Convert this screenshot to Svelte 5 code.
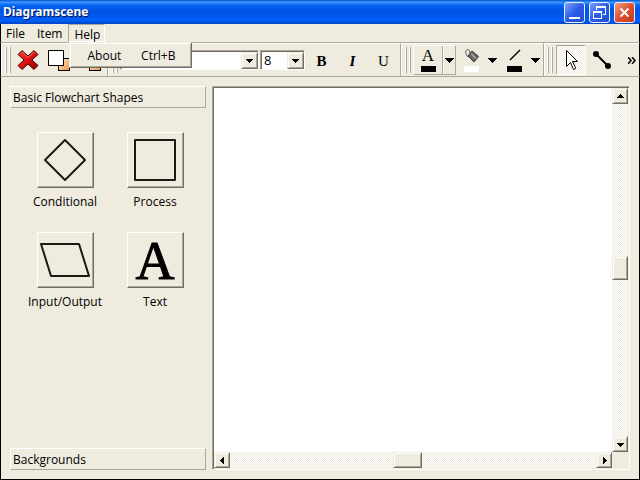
<script>
  const menus = ["File", "Item"];
  const shapes = ["Conditional", "Process", "Input/Output", "Text"];

  let family = $state("");
  let size = $state("8");
  let pointer = $state(true);
  let helpOpen = $state(true);
</script>

{#snippet arrow(dir)}
  <svg class="arrow" width="7" height="7" viewBox="0 0 7 7" shape-rendering="crispEdges">
    {#if dir === "up"}
      <path d="M3 1h1v1h1v1h1v1h1v1H0V4h1V3h1V2h1z" />
    {:else if dir === "down"}
      <path d="M0 2h7v1H6v1H5v1H4v1H3V5H2V4H1V3H0z" />
    {:else if dir === "left"}
      <path d="M5 0v7H4V6H3V5H2V4H1V3h1V2h1V1h1V0z" />
    {:else}
      <path d="M2 0v7h1V6h1V5h1V4h1V3H5V2H4V1H3V0z" />
    {/if}
  </svg>
{/snippet}

{#snippet bigArrow()}
  <svg width="9" height="5" viewBox="0 0 9 5" shape-rendering="crispEdges">
    <path d="M0 0h9v1H8v1H7v1H6v1H5v1H4V4H3V3H2V2H1V1H0z" />
  </svg>
{/snippet}

<div class="window">
  <header class="titlebar">
    <h1>Diagramscene</h1>
    <button class="caption" aria-label="Minimize">
      <svg width="19" height="19" viewBox="0 0 19 19"><path d="M4 14h11v2H4z" fill="#fff" /></svg>
    </button>
    <button class="caption" aria-label="Restore">
      <svg width="19" height="19" viewBox="0 0 19 19" fill="none" stroke="#fff" shape-rendering="crispEdges">
        <path d="M6.5 7V3.5h9v8H13M6 4.5h10M3.5 8.5h8v7h-8zM3 9.5h9" />
      </svg>
    </button>
    <button class="caption close" aria-label="Close">
      <svg width="19" height="19" viewBox="0 0 19 19" stroke="#fff" stroke-width="2">
        <path d="M5.5 5.5l8 8M13.5 5.5l-8 8" />
      </svg>
    </button>
  </header>

  <nav class="menubar">
    {#each menus as menu}
      <button class="menu">{menu}</button>
    {/each}
    <div class="menu-holder">
      <button class="menu" class:open={helpOpen} onclick={() => (helpOpen = !helpOpen)}>Help</button>
      {#if helpOpen}
        <div class="popup">
          <button class="entry"><span>About</span><span>Ctrl+B</span></button>
        </div>
      {/if}
    </div>
  </nav>

  <div class="toolbars">
    <div class="toolbar edit">
      <span class="handle"></span>
      <button class="tool" aria-label="Delete">
        <svg width="22" height="22" viewBox="0 0 22 22">
          <defs>
            <linearGradient id="red" x1="0" y1="0" x2="1" y2="1">
              <stop offset="0" stop-color="#f04038" />
              <stop offset="0.5" stop-color="#e01010" />
              <stop offset="1" stop-color="#900000" />
            </linearGradient>
          </defs>
          <path
            d="M5 1.500l6 5.500 6-5.500 4 4-6 5.500 6 5.500-4 4-6-5.500-6 5.500-4-4 6-5.500-6-5.500z"
            fill="url(#red)"
            stroke="#400808"
            stroke-linejoin="round"
          />
          <path d="M5 3l6 5.500 6-5.500" fill="none" stroke="#f47068" />
        </svg>
      </button>
      <button class="tool" aria-label="Bring to front">
        <svg width="24" height="24" viewBox="0 0 24 24">
          <defs>
            <linearGradient id="peach" x1="0" y1="0" x2="1" y2="1">
              <stop offset="0" stop-color="#fff0e0" />
              <stop offset="1" stop-color="#f09040" />
            </linearGradient>
          </defs>
          <rect x="11.5" y="10.5" width="11" height="12" fill="url(#peach)" stroke="#000" />
          <rect x="1.5" y="2.5" width="15" height="15" fill="#fff" stroke="#000" />
        </svg>
      </button>
      <button class="tool" aria-label="Send to back">
        <svg width="24" height="24" viewBox="0 0 24 24">
          <rect x="1.5" y="2.5" width="11" height="11" fill="#fff" stroke="#000" />
          <rect x="11.5" y="7.500" width="11" height="15" fill="url(#peach)" stroke="#000" />
        </svg>
      </button>
    </div>

    <div class="toolbar text">
      <span class="handle"></span>
      <div class="combo family">
        <select aria-label="Font" bind:value={family}><option value=""></option></select>
        <span class="drop">{@render arrow("down")}</span>
      </div>
      <div class="combo size">
        <select aria-label="Font size" bind:value={size}>
          <option>8</option>
          <option>10</option>
          <option>12</option>
        </select>
        <span class="drop">{@render arrow("down")}</span>
      </div>
      <button class="tool letter bold">B</button>
      <button class="tool letter italic">I</button>
      <button class="tool letter">U</button>
    </div>

    <div class="toolbar color">
      <span class="handle"></span>
      <div class="split raised">
        <button class="main" aria-label="Text color">
          <span class="glyph">A</span>
          <span class="swatch"></span>
        </button>
        <button class="more" aria-label="Choose text color">{@render bigArrow()}</button>
      </div>
      <div class="split">
        <button class="main" aria-label="Fill color">
          <svg width="16" height="16" viewBox="0 0 16 16">
            <path d="M8 3l6.500 5.500-4.500 5.500-6-6z" fill="#666" stroke="#333" />
            <path d="M7 5.500l5 5" stroke="#aaa" stroke-width="1.500" />
            <path d="M4 9C1 6 1 2 3.500 1.500 5 1 6 4 6 7" fill="none" stroke="#555" />
          </svg>
          <span class="swatch white"></span>
        </button>
        <button class="more" aria-label="Choose fill color">{@render bigArrow()}</button>
      </div>
      <div class="split">
        <button class="main" aria-label="Line color">
          <svg width="16" height="16" viewBox="0 0 16 16">
            <path d="M3 12L13 2" stroke="#000" stroke-width="1.5" />
          </svg>
          <span class="swatch"></span>
        </button>
        <button class="more" aria-label="Choose line color">{@render bigArrow()}</button>
      </div>
    </div>

    <div class="toolbar pointers">
      <span class="handle"></span>
      <button class="tool" class:pressed={pointer} aria-label="Pointer" onclick={() => (pointer = true)}>
        <svg width="20" height="24" viewBox="0 0 20 24">
          <path
            d="M5.5 2.5v16l4-4 3 7 2-1v-1l-3-6h5z"
            fill="#fff"
            stroke="#000"
          />
        </svg>
      </button>
      <button class="tool" class:pressed={!pointer} aria-label="Line" onclick={() => (pointer = false)}>
        <svg width="20" height="20" viewBox="0 0 20 20">
          <path d="M4 4l12 12" stroke="#000" stroke-width="2" />
          <circle cx="4" cy="4" r="3" />
          <circle cx="16" cy="16" r="3" />
        </svg>
      </button>
      <button class="extend" aria-label="More tools">
        <svg width="8" height="7" viewBox="0 0 8 7" fill="none" stroke="#000" stroke-width="1.5">
          <path d="M0 0l3 3.5-3 3.5M4 0l3 3.5-3 3.5" />
        </svg>
      </button>
    </div>
  </div>

  <main>
    <aside class="toolbox">
      <button class="page">Basic Flowchart Shapes</button>
      <div class="shapes">
        {#each shapes as shape, i}
          <div class="shape">
            <button id="shape-{i}" aria-labelledby="label-{i}">
              {#if shape === "Text"}
                <span class="big">A</span>
              {:else}
                <svg width="52" height="52" viewBox="0 0 52 52" fill="none" stroke="#1c1814" stroke-width="2">
                  {#if shape === "Conditional"}
                    <path d="M26 6l20 20-20 20L6 26z" stroke-linejoin="round" />
                  {:else if shape === "Process"}
                    <path d="M6 6h40v40H6z" stroke-linejoin="round" />
                  {:else}
                    <path d="M2 10h38l10 32H12z" stroke-linejoin="round" />
                  {/if}
                </svg>
              {/if}
            </button>
            <label id="label-{i}" for="shape-{i}">{shape}</label>
          </div>
        {/each}
      </div>
      <button class="page">Backgrounds</button>
    </aside>

    <section class="view">
      <div class="canvas"></div>
      <div class="scroll vertical">
        <button aria-label="Scroll up">{@render arrow("up")}</button>
        <div class="track"><div class="thumb"></div></div>
        <button aria-label="Scroll down">{@render arrow("down")}</button>
      </div>
      <div class="scroll horizontal">
        <button aria-label="Scroll left">{@render arrow("left")}</button>
        <div class="track"><div class="thumb"></div></div>
        <button aria-label="Scroll right">{@render arrow("right")}</button>
      </div>
    </section>
  </main>
</div>

<style>
  :global(body) {
    margin: 0;
  }

  .window {
    --face: #efebde;
    --shade: #aca899;
    --dark: #716f64;
    display: flex;
    flex-direction: column;
    min-height: 100vh;
    box-sizing: border-box;
    border-bottom: 1px solid #000;
    background: var(--face);
    color: #000;
    font: 12px/16px "Open Sans", Tahoma, sans-serif;
  }

  .window :global(*) {
    box-sizing: border-box;
  }

  button {
    margin: 0;
    border: 0;
    padding: 0;
    background: none;
    color: inherit;
    font: inherit;
  }

  svg {
    display: block;
    flex: none;
  }

  .titlebar {
    display: flex;
    align-items: center;
    gap: 4px;
    height: 24px;
    padding: 0 5px 0 3px;
    background: linear-gradient(#0050c8 0, #3c98ff 2px, #0a68f4 5px, #0054e3 10px, #0058ee 17px, #0062fa 20px, #0044c4 24px);
  }

  h1 {
    flex: 1;
    margin: 0;
    color: #fff;
    font: bold 12px/22px "Noto Sans", Tahoma, sans-serif;
    text-shadow: 1px 1px #001050;
  }

  .caption {
    display: grid;
    place-items: center;
    width: 21px;
    height: 21px;
    border: 1px solid #e8f0ff;
    border-radius: 3px;
    background: linear-gradient(135deg, #7ca4f8, #2c5ce8 50%, #2050d0);
  }

  .close {
    background: linear-gradient(135deg, #f0a088, #e05030 50%, #c03c18);
  }

  .menubar,
  .toolbars,
  main {
    border-left: 1px solid #000;
    border-right: 1px solid #000;
  }

  .menubar {
    display: flex;
    height: 18px;
  }

  .menu {
    height: 18px;
    padding: 1px 5px 0;
    border: 1px solid transparent;
    line-height: 16px;
  }

  .menu:first-child {
    padding: 1px 5px 0 4px;
  }

  .menu.open {
    border-color: var(--shade) #fff #fff var(--shade);
    padding: 2px 4px 0 5px;
  }

  .menu-holder {
    position: relative;
  }

  .popup {
    position: absolute;
    z-index: 1;
    top: 18px;
    left: 1px;
    width: 123px;
    border: 1px solid;
    border-color: var(--face) var(--dark) var(--dark) var(--face);
    box-shadow: inset 1px 1px #fff, inset -1px -1px var(--shade);
    background: var(--face);
  }

  .entry {
    display: flex;
    justify-content: space-between;
    width: 100%;
    padding: 5px 16px 3px 17px;
  }

  .toolbars {
    display: flex;
    height: 35px;
    border-top: 1px solid var(--shade);
    border-bottom: 1px solid var(--shade);
  }

  .toolbar {
    display: flex;
    align-items: center;
    padding-left: 3px;
    border-top: 1px solid #fff;
    border-left: 1px solid #fff;
    border-right: 1px solid var(--shade);
  }

  .toolbar:last-child {
    flex: 1;
    border-right: 0;
  }

  .handle {
    flex: none;
    width: 6px;
    height: 26px;
    margin-right: 2px;
    border: 1px solid;
    border-width: 0 2px;
    border-image: linear-gradient(90deg, #fff 1px, var(--shade) 1px 2px, transparent 2px 4px, #fff 4px 5px, var(--shade) 5px) 0 2;
  }

  .tool {
    display: grid;
    flex: none;
    place-items: center;
    width: 30px;
    height: 30px;
  }

  .edit {
    gap: 1px;
    flex: 0 0 107px;
  }

  .edit .handle {
    margin-right: 1px;
  }

  .pointers {
    gap: 1px;
    padding-left: 2px;
  }

  .text {
    flex: 0 0 293px;
    padding-right: 1px;
  }

  .combo {
    display: grid;
    grid-template-columns: 1fr 17px;
    height: 20px;
    border: 1px solid;
    border-color: var(--shade) #fff #fff var(--shade);
    box-shadow: inset 1px 1px var(--dark);
    background: #fff;
  }

  .family {
    flex: 1;
  }

  .size {
    width: 45px;
    margin: 0 1px;
  }

  select {
    grid-area: 1 / 1 / 2 / 3;
    appearance: none;
    width: 100%;
    border: 0;
    padding: 0 18px 0 3px;
    background: none;
    color: inherit;
    font: inherit;
    font-size: 13px;
  }

  .drop {
    display: grid;
    grid-area: 1 / 2;
    place-items: center;
    margin-top: 1px;
    pointer-events: none;
  }

  .drop,
  .scroll button,
  .thumb {
    border: 1px solid;
    border-color: var(--face) var(--dark) var(--dark) var(--face);
    box-shadow: inset 1px 1px #fff, inset -1px -1px var(--shade);
    background: var(--face);
  }

  .letter {
    width: 31px;
    padding-top: 2px;
    font: 15px/20px "Liberation Serif", "Times New Roman", serif;
  }

  .bold {
    font-weight: bold;
  }

  .italic {
    font-style: italic;
    font-weight: bold;
  }

  .color {
    flex: 0 0 143px;
  }

  .split {
    display: flex;
    width: 43px;
    height: 30px;
    border: 1px solid transparent;
  }

  .main {
    display: flex;
    flex: 1;
    flex-direction: column;
    align-items: center;
    justify-content: space-between;
    padding: 2px 0;
  }

  .more {
    display: grid;
    place-items: center;
    width: 12px;
    border-left: 1px solid transparent;
  }

  .raised,
  .raised .more {
    border-color: #fff var(--shade) var(--shade) #fff;
  }

  .raised .main {
    border-right: 1px solid var(--shade);
  }

  .glyph {
    font: 17px/16px "Liberation Serif", "Times New Roman", serif;
  }

  .swatch {
    width: 15px;
    height: 6px;
    background: #000;
  }

  .white {
    background: #fff;
  }

  .pressed,
  .track {
    background: repeating-conic-gradient(#fff 0 25%, var(--face) 0 50%) 0 0 / 2px 2px;
  }

  .pressed {
    border: 1px solid;
    border-color: var(--shade) #fff #fff var(--shade);
  }

  .extend {
    margin-left: auto;
    padding: 8px 3px;
  }

  main {
    display: flex;
    flex: 1;
    gap: 6px;
    padding: 9px;
  }

  .toolbox {
    display: flex;
    flex: 0 0 196px;
    flex-direction: column;
  }

  .page {
    height: 22px;
    border: 1px solid;
    border-color: #fff var(--shade) var(--shade) #fff;
    padding: 2px 2px 0;
    text-align: left;
  }

  .shapes {
    display: grid;
    flex: 1;
    grid-template-columns: 90px 90px;
    grid-auto-rows: 100px;
    padding: 24px 0 0 10px;
  }

  .shape {
    display: flex;
    flex-direction: column;
    align-items: center;
    gap: 6px;
  }

  .shape button {
    display: grid;
    place-items: center;
    width: 57px;
    height: 56px;
    border: 1px solid;
    border-color: #fff var(--dark) var(--dark) #fff;
    box-shadow: inset -1px -1px var(--shade);
  }

  .big {
    padding-top: 2px;
    font: 54px/52px "Liberation Serif", "Times New Roman", serif;
    -webkit-text-stroke: 1px #000;
  }

  .view {
    display: grid;
    flex: 1;
    grid-template: 1fr 16px / 1fr 16px;
    border: 1px solid;
    border-color: var(--shade) #fff #fff var(--shade);
    padding: 1px;
    box-shadow: inset 1px 1px var(--dark);
  }

  .canvas {
    background: #fff;
  }

  .scroll {
    display: flex;
  }

  .scroll button {
    display: grid;
    flex: none;
    place-items: center;
    width: 16px;
    height: 16px;
  }

  .vertical,
  .vertical .track {
    flex-direction: column;
  }

  .track {
    display: flex;
    flex: 1;
  }

  .track::before,
  .track::after {
    content: "";
  }

  .vertical .thumb {
    height: 24px;
  }

  .vertical .track::before {
    flex: 38;
  }

  .vertical .track::after {
    flex: 39;
  }

  .horizontal .thumb {
    width: 29px;
  }

  .horizontal .track::before {
    flex: 15;
  }

  .horizontal .track::after {
    flex: 16;
  }
</style>
